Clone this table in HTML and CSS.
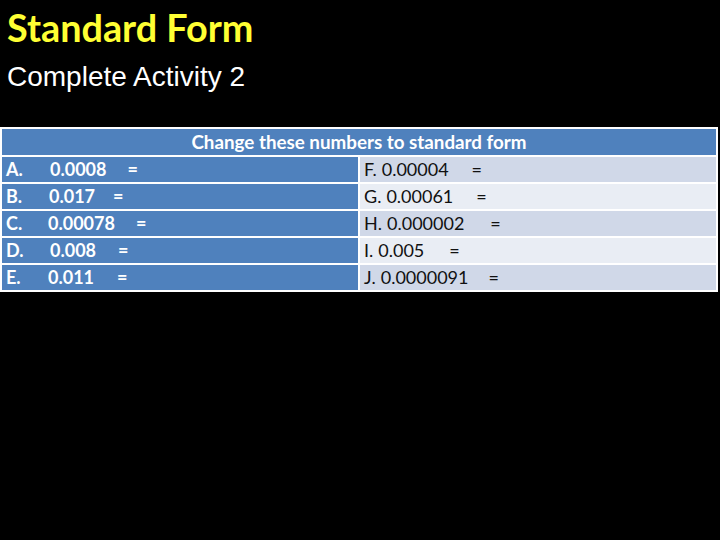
FILE: index.html
```html
<!DOCTYPE html>
<html>
<head>
<meta charset="utf-8">
<link rel="stylesheet" href="styles.css">
</head>
<body>
<div class="slide">
  <h1 class="title">Standard Form</h1>
  <p class="subtitle">Complete Activity 2</p>
  <table class="grid">
    <tr><th colspan="2" class="head">Change these numbers to standard form</th></tr>
    <tr class="odd">
      <td class="left"><span class="lbl">A.</span><span class="n1">0.0008</span><span class="eq e1">=</span></td>
      <td class="right"><span class="rl">F.</span><span class="rn">0.00004</span><span class="eq r1">=</span></td>
    </tr>
    <tr class="even">
      <td class="left"><span class="lbl">B.</span><span class="n2">0.017</span><span class="eq e2">=</span></td>
      <td class="right"><span class="rl">G.</span><span class="rn">0.00061</span><span class="eq r2">=</span></td>
    </tr>
    <tr class="odd">
      <td class="left"><span class="lbl">C.</span><span class="n3">0.00078</span><span class="eq e3">=</span></td>
      <td class="right"><span class="rl">H.</span><span class="rn">0.000002</span><span class="eq r3">=</span></td>
    </tr>
    <tr class="even">
      <td class="left"><span class="lbl">D.</span><span class="n1">0.008</span><span class="eq e4">=</span></td>
      <td class="right"><span class="rl">I.</span><span class="rn">0.005</span><span class="eq r4">=</span></td>
    </tr>
    <tr class="odd">
      <td class="left"><span class="lbl">E.</span><span class="n3">0.011</span><span class="eq e5">=</span></td>
      <td class="right"><span class="rl">J.</span><span class="rn">0.0000091</span><span class="eq r5">=</span></td>
    </tr>
  </table>
</div>
</body>
</html>
```
FILE: styles.css
```css
html, body {
  margin: 0;
  padding: 0;
  background: #000;
}
.slide {
  width: 720px;
  height: 540px;
  background: #000;
  overflow: hidden;
}
.title {
  margin: 0;
  padding: 6px 0 0 7px;
  font-family: "Lato", "Open Sans", sans-serif;
  font-weight: 700;
  font-size: 37.8px;
  line-height: 44px;
  color: #ffff33;
}
.subtitle {
  margin: 0;
  padding: 12px 0 0 7px;
  font-family: "Liberation Sans", Arial, sans-serif;
  font-size: 28px;
  line-height: 30px;
  color: #fff;
}
.grid {
  margin-top: 35px;
  width: 718px;
  border-collapse: separate;
  border-spacing: 2px;
  background: #fff;
  font-family: "Lato", "Open Sans", sans-serif;
  font-size: 18px;
  table-layout: fixed;
}
.grid th, .grid td {
  padding: 0;
  white-space: nowrap;
}
.head {
  height: 26px;
  background: #4f81bd;
  color: #fff;
  font-weight: 700;
  font-size: 18.8px;
  text-align: center;
  line-height: 26px;
}
.grid td {
  height: 25px;
  line-height: 25px;
}
.left {
  width: 356px;
  background: #4f81bd;
  color: #fff;
  font-weight: 700;
  padding-left: 4px !important;
}
.right {
  color: #111;
  padding-left: 4px !important;
}
.odd .right { background: #d0d8e8; }
.even .right { background: #e9edf4; }
.lbl {
  display: inline-block;
  width: 42px;
}
.n1 { margin-left: 2px; }
.n2 { margin-left: 1px; }
.n3 { margin-left: 0; }
.eq { display: inline-block; }
.e1 { margin-left: 21px; }
.e2 { margin-left: 18px; }
.e3 { margin-left: 21px; }
.e4 { margin-left: 22px; }
.e5 { margin-left: 23px; }
.rl { margin-right: 5px; }
.r1 { margin-left: 23px; }
.r2 { margin-left: 23px; }
.r3 { margin-left: 26px; }
.r4 { margin-left: 25px; }
.r5 { margin-left: 20px; }
```
